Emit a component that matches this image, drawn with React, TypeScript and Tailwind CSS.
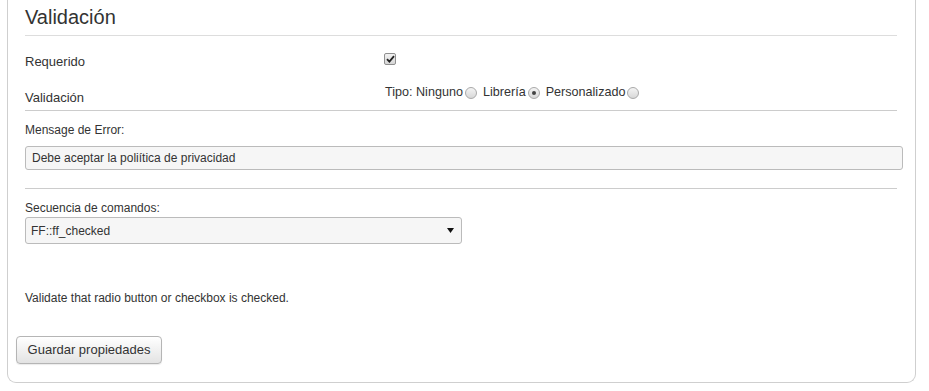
import React from 'react';

const Radio: React.FC<{ checked?: boolean }> = ({ checked }) => (
  <span className="inline-flex items-center justify-center w-[12px] h-[12px] rounded-full border border-[#a9a9a9] bg-gradient-to-b from-[#f4f4f4] to-[#d8d8d8] ml-[2px] mr-[6px] translate-y-[2px]">
    {checked && <span className="w-[4px] h-[4px] rounded-full bg-[#444]" />}
  </span>
);

const Checkbox: React.FC = () => (
  <span className="inline-flex items-center justify-center w-[12px] h-[12px] rounded-[2px] border border-[#8f8f8f] bg-gradient-to-b from-[#f2f2f2] to-[#d6d6d6] -translate-y-[3px] -translate-x-[1px]">
    <svg width="9" height="8" viewBox="0 0 9 8">
      <path d="M1 4.2 L3.4 6.6 L8 1.2" stroke="#222" strokeWidth="1.8" fill="none" />
    </svg>
  </span>
);

export default function App() {
  return (
    <div className="w-[929px] h-[391px] bg-white text-[#333] font-['Liberation_Sans',Arial,sans-serif] pl-[7px] pr-[13px]">
      <div className="h-[383px] border-l border-r border-b border-[#cfcfcf] rounded-b-[9px] flex flex-col">
        <div className="pl-[17px] pr-[18px]">
          <div className="h-[36px] border-b border-[#ddd] pt-[5px]">
            <h2 className="text-[20px] leading-[24px]">Validación</h2>
          </div>

          <div className="flex items-center h-[50px] pt-[2px] text-[13px]">
            <span className="w-[360px]">Requerido</span>
            <Checkbox />
          </div>

          <div className="flex h-[25px] border-b border-[#ccc] text-[13px]">
            <span className="w-[360px] leading-[24px]">Validación</span>
            <span className="leading-[14px] text-[12.6px] -translate-y-[1px] flex items-start">
              Tipo: Ninguno<Radio />Librería<Radio checked />Personalizado<Radio />
            </span>
          </div>

          <div className="text-[12px] leading-[14px] pt-[12px]">Mensage de Error:</div>
          <div className="mt-[9px] w-[878px] h-[24px] border border-[#bbb] rounded-[3px] bg-[#f6f6f6] px-[6px] text-[12px] leading-[22px]">
            Debe aceptar la poliítica de privacidad
          </div>

          <div className="mt-[18px] border-b border-[#ccc]" />

          <div className="text-[12px] leading-[14px] pt-[12px]">Secuencia de comandos:</div>
          <div className="mt-[2px] w-[437px] h-[27px] border border-[#bbb] rounded-[3px] bg-[#f6f6f6] pl-[5px] pr-[7px] text-[12px] flex items-center justify-between">
            <span>FF::ff_checked</span>
            <svg width="7" height="5" viewBox="0 0 7 5">
              <path d="M0 0 H7 L3.5 5 Z" fill="#111" />
            </svg>
          </div>

          <div className="mt-[47px] text-[12px] leading-[14px]">
            Validate that radio button or checkbox is checked.
          </div>
        </div>

        <div className="pl-[8px] mt-[31px]">
          <button className="w-[146px] h-[28px] border border-[#b5b5b5] rounded-[4px] bg-gradient-to-b from-[#ffffff] to-[#e3e3e3] text-[13px] text-[#333] shadow-[0_1px_1px_rgba(0,0,0,0.08)]">
            Guardar propiedades
          </button>
        </div>
      </div>
    </div>
  );
}
